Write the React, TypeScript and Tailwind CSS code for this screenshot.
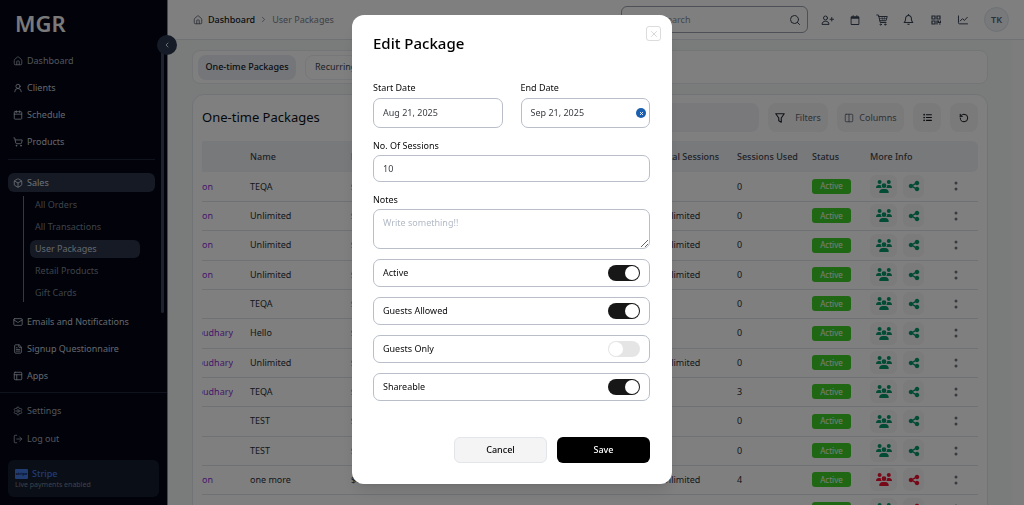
import React from "react";
import {
  Box, Calendar, ChevronLeft, ChevronRight, FileText, House, PanelsTopLeft, LogOut, Mail,
  RotateCcw, Search, Settings, ShoppingCart, UserRound, Columns2, X,
} from "lucide-react";
import { FaUsers, FaShareNodes, FaListUl, FaRegBell, FaRegCalendar } from "react-icons/fa6";

type IconType = React.ComponentType<{ className?: string; strokeWidth?: number }>;

function NavItem({ icon: Icon, label, active, bright }: { icon: IconType; label: string; active?: boolean; bright?: boolean }) {
  return (
    <a
      href="#"
      className={
        "flex h-[19px] items-center gap-[4px] rounded-md px-[5px] text-[9px] " +
        (active ? "bg-[#2a3448] text-[#dbe1ea]" : bright ? "text-[#c6cdd8]" : "text-[#a3abb9]")
      }
    >
      <Icon className="size-[10px] shrink-0" strokeWidth={2} />
      {label}
    </a>
  );
}

function Sidebar({ children }: { children?: React.ReactNode }) {
  const sub = ["All Orders", "All Transactions", "User Packages", "Retail Products", "Gift Cards"];
  return (
    <aside className="relative flex w-[168px] shrink-0 flex-col border-r border-[#8a8f98] bg-[#020414]">
      <div className="flex min-h-0 flex-1">
        <div className="flex min-w-0 flex-1 flex-col overflow-hidden pl-2">
          <div className="flex h-[45px] items-center pl-[7px] text-[22px] leading-none font-semibold text-[#f4f4f4]">MGR</div>
          <nav className="mr-[6px] flex flex-col gap-2 border-b border-[#20273a] pt-[6px] pb-2">
            <NavItem icon={House} label="Dashboard" />
            <NavItem icon={UserRound} label="Clients" bright />
            <NavItem icon={Calendar} label="Schedule" bright />
            <NavItem icon={ShoppingCart} label="Products" bright />
          </nav>
          <nav className="mr-[6px] flex flex-col pt-[13px]">
            <NavItem icon={Box} label="Sales" active />
            <ul className="mt-[4px] ml-[15px] flex flex-col gap-1 border-l border-[#6d7480] pl-[6px]">
              {sub.map((s) => (
                <li key={s}>
                  <a
                    href="#"
                    className={
                      "mr-[15px] flex h-[18px] items-center rounded-md px-[5px] text-[9px] " +
                      (s === "User Packages" ? "bg-[#2a3448] text-[#c6cdd8]" : "text-[#7c8493]")
                    }
                  >
                    {s}
                  </a>
                </li>
              ))}
            </ul>
            <div className="flex flex-col gap-2 pt-[10px]">
              <NavItem icon={Mail} label="Emails and Notifications" bright />
              <NavItem icon={FileText} label="Signup Questionnaire" bright />
              <NavItem icon={PanelsTopLeft} label="Apps" bright />
            </div>
          </nav>
        </div>
        <div className="mt-[45px] mr-[3px] h-[268px] w-[3px] rounded-full bg-[#39465f]" />
      </div>
      <div className="flex flex-col gap-[9px] border-t border-[#20273a] px-2 pt-[8px] pb-2">
        <NavItem icon={Settings} label="Settings" />
        <NavItem icon={LogOut} label="Log out" />
        <div className="mt-[3px] flex h-[37px] flex-col justify-center rounded-md bg-[#141d2e] px-[7px]">
          <div className="flex items-center gap-[4px] text-[9px] leading-[12px] font-medium text-[#4378e0]">
            <span className="flex h-[10px] w-[13px] items-center justify-center rounded-[1px] bg-[#4378e0] text-[4px] leading-none font-bold text-[#12203f]">stripe</span>
            Stripe
          </div>
          <div className="text-[7px] leading-[10px] text-[#7c8493]">Live payments enabled</div>
        </div>
      </div>
      {children}
    </aside>
  );
}

function UserPlusIcon() {
  return (
    <svg viewBox="0 0 26 20" className="h-[10px] w-[13px]" fill="none" stroke="currentColor" strokeWidth="2" strokeLinecap="round">
      <circle cx="9" cy="6" r="4" />
      <path d="M2 18c0-3.500 3-5.500 7-5.500s7 2 7 5.500z" strokeLinejoin="round" />
      <path d="M21.500 5v7M18 8.500h7" />
    </svg>
  );
}

function CartIcon() {
  return (
    <svg viewBox="0 0 24 24" className="size-[12px]" fill="none" stroke="currentColor" strokeWidth="2" strokeLinecap="round" strokeLinejoin="round">
      <path d="M1.500 2h3.500l3.500 15h11.500M5.500 5h17l-2.500 8.500H8" />
      <path d="M7 9h14M12 5l.8 8M17 5l-.8 8" strokeWidth="1.200" />
      <circle cx="9.500" cy="21" r="1.300" />
      <circle cx="18.500" cy="21" r="1.300" />
    </svg>
  );
}

function QrIcon() {
  return (
    <svg viewBox="0 0 20 20" className="size-[10px]" fill="none" stroke="currentColor" strokeWidth="2.400">
      <path d="M2 2h6v6H2zM12 2h6v6h-6zM2 12h6v6H2z" />
      <path d="M12 19v-7h3v3h4v-4M16 18h3" />
    </svg>
  );
}

function ChartIcon() {
  return (
    <svg viewBox="0 0 24 22" className="h-[10px] w-[12px]" fill="none" stroke="currentColor" strokeWidth="2.200" strokeLinecap="round" strokeLinejoin="round">
      <path d="M2 2v15a2.500 2.500 0 0 0 2.500 2.500H22M6 13l5-5 4 4 6.500-7" />
    </svg>
  );
}

function FunnelIcon() {
  return (
    <svg viewBox="0 0 20 20" className="size-[10px] text-[#1f2430]" fill="none" stroke="currentColor" strokeWidth="2.200" strokeLinejoin="round">
      <path d="M1.500 1.500h17l-6 8.500v8.500l-5-3V10z" />
    </svg>
  );
}

function Header() {
  const actions: [string, React.ReactNode][] = [
    ["Add user", <UserPlusIcon />],
    ["Calendar", <FaRegCalendar className="size-[10px]" />],
    ["Cart", <CartIcon />],
    ["Notifications", <FaRegBell className="size-[11px]" />],
    ["QR code", <QrIcon />],
    ["Reports", <ChartIcon />],
  ];
  return (
    <header className="flex h-[40px] shrink-0 items-center border-b border-[#dfe3e8] bg-white pr-[15px] pl-[25px]">
      <nav className="flex flex-1 items-center text-[9px]">
        <House className="size-[10px] text-[#555d6b]" />
        <a href="#" className="ml-[5px] font-medium text-[#111827]">Dashboard</a>
        <ChevronRight className="mx-[4px] size-[9px] text-[#6b7280]" />
        <span className="text-[#7b818d]">User Packages</span>
      </nav>
      <div className="flex h-[27px] w-[187px] items-center rounded-md border border-[#9aa1ae] bg-white pr-[6px] pl-[40px]">
        <input aria-label="Search" placeholder="Search" className="min-w-0 flex-1 bg-transparent text-[9px] outline-none placeholder:text-[#8a909c]" />
        <Search className="size-[12px] text-[#374151]" />
      </div>
      <div className="ml-[6px] flex items-center text-[#3b4759]">
        {actions.map(([label, icon]) => (
          <button key={label} aria-label={label} className="flex w-[27px] items-center justify-center">{icon}</button>
        ))}
      </div>
      <div className="ml-[8px] flex size-[25px] items-center justify-center rounded-full border border-[#dde3ea] bg-[#eef2f7] text-[9px] font-semibold text-[#576274]">TK</div>
    </header>
  );
}

type Row = { who: string; name: string; total: string; used: string; off?: "all" | "share" };
const rows: Row[] = [
  { who: "on", name: "TEQA", total: "", used: "0" },
  { who: "on", name: "Unlimited", total: "Unlimited", used: "0" },
  { who: "on", name: "Unlimited", total: "Unlimited", used: "0" },
  { who: "on", name: "Unlimited", total: "Unlimited", used: "0" },
  { who: "", name: "TEQA", total: "", used: "0" },
  { who: "oudhary", name: "Hello", total: "", used: "0" },
  { who: "oudhary", name: "Unlimited", total: "Unlimited", used: "0" },
  { who: "oudhary", name: "TEQA", total: "", used: "3" },
  { who: "", name: "TEST", total: "", used: "0" },
  { who: "", name: "TEST", total: "", used: "0" },
  { who: "on", name: "one more", total: "Unlimited", used: "4", off: "all" },
  { who: "", name: "", total: "", used: "", off: "share" },
];

function PackagesTable() {
  return (
    <table className="w-full table-fixed border-collapse text-left text-[9px] text-[#2b2f36]">
      <colgroup>
        <col className="w-[48px]" />
        <col className="w-[101px]" />
        <col />
        <col className="w-[78px]" />
        <col className="w-[75px]" />
        <col className="w-[58px]" />
        <col className="w-[76px]" />
        <col className="w-[32px]" />
      </colgroup>
      <thead>
        <tr className="h-[31px] bg-[#f1f2f6] text-[#3f4550]">
          <th />
          <th className="font-medium">Name</th>
          <th className="font-medium">Price</th>
          <th className="font-medium">Total Sessions</th>
          <th className="font-medium">Sessions Used</th>
          <th className="font-medium">Status</th>
          <th className="font-medium">More Info</th>
          <th className="rounded-r-md" />
        </tr>
      </thead>
      <tbody>
        {rows.map((r, i) => (
          <tr key={i} className="h-[29px] border-b border-[#dfe2e7] nth-[3n]:h-[30px]">
            <td>
              <div className={"flex w-[31px] overflow-hidden text-[#8b2fd6] " + (r.who.length > 2 ? "justify-end" : "")}>
                <a href="#">{r.who}</a>
              </div>
            </td>
            <td>{r.name}</td>
            <td>$0</td>
            <td>{r.total}</td>
            <td>{r.used}</td>
            <td>
              <span className="flex h-[15px] w-[39px] items-center justify-center rounded-[3px] bg-[#40cf28] text-[8px] leading-none text-[#f0fbee]">Active</span>
            </td>
            <td>
              <div className="flex gap-[6px]">
                <button aria-label="Guests" className={"flex h-[23px] w-[27px] items-center justify-center rounded-md bg-[#f6f7f9] " + (r.off === "all" ? "text-[#ef1030]" : "text-[#059669]")}>
                  <FaUsers className="h-[13px] w-[16px]" />
                </button>
                <button aria-label="Share" className={"flex h-[23px] w-[21px] items-center justify-center rounded-md bg-[#f6f7f9] " + (r.off ? "text-[#ef1030]" : "text-[#059669]")}>
                  <FaShareNodes className="size-[12px]" />
                </button>
              </div>
            </td>
            <td>
              <button aria-label="Row actions" className="flex w-[20px] justify-center">
                <svg viewBox="0 0 4 10" className="h-[10px] w-[4px]" fill="#737780">
                  <circle cx="2" cy="2" r="1.500" />
                  <circle cx="2" cy="8" r="1.500" />
                </svg>
              </button>
            </td>
          </tr>
        ))}
      </tbody>
    </table>
  );
}

function ToolButton({ children, label, className }: { children: React.ReactNode; label: string; className: string }) {
  return (
    <button aria-label={label} className={"flex h-[29px] items-center justify-center rounded-lg bg-[#f4f5f7] text-[9px] text-[#5d6470] " + className}>
      {children}
    </button>
  );
}

function Main() {
  return (
    <div className="flex min-w-0 flex-1 flex-col overflow-hidden">
      <Header />
      <div className="flex min-h-0 flex-1">
        <main className="flex min-w-0 flex-1 flex-col gap-[10px] overflow-hidden bg-[#f4f7f7] pt-[10px] pr-6 pl-6">
          <div className="flex h-[34px] shrink-0 items-center gap-[9px] rounded-lg border border-[#e6ebee] bg-white px-[5px]">
            <button className="h-[25px] w-[98px] rounded-lg bg-[#e9edf3] text-[9px] font-medium text-[#111827]">One-time Packages</button>
            <button className="h-[25px] rounded-lg border border-[#eceff2] px-[9px] text-[9px] text-[#3c4350]">Recurring Packages</button>
          </div>
          <section className="shrink-0 rounded-t-xl border border-[#e3e8ec] bg-white px-[9px] pt-[8px]">
            <div className="flex items-center gap-[9px] pb-[9px]">
              <h1 className="flex-1 text-[13px] text-[#0c0f14]">One-time Packages</h1>
              <div className="h-[29px] w-[200px] rounded-lg bg-[#f2f3f6]" />
              <ToolButton label="Filters" className="w-[60px] gap-[10px]"><FunnelIcon />Filters</ToolButton>
              <ToolButton label="Columns" className="w-[67px] gap-[5px]"><Columns2 className="size-[10px]" />Columns</ToolButton>
              <ToolButton label="List view" className="w-[28px]"><FaListUl className="size-[9px] text-[#14171c]" /></ToolButton>
              <ToolButton label="Reset" className="w-[28px]"><RotateCcw className="size-[10px] text-[#14171c]" strokeWidth={2.4} /></ToolButton>
            </div>
            <PackagesTable />
          </section>
        </main>
        <div className="w-[12px] bg-[#fafafa]" />
      </div>
    </div>
  );
}

function DateField({ id, label, value, clearable }: { id: string; label: string; value: string; clearable?: boolean }) {
  return (
    <div className="min-w-0 flex-1">
      <label htmlFor={id} className="block h-[17px] leading-[13px]">{label}</label>
      <div className="flex h-[30px] items-center rounded-[7px] border border-[#b9bec9] pr-[3px] pl-[9px]">
        <input id={id} defaultValue={value} className="min-w-0 flex-1 text-[#3a3d42] outline-none" />
        {clearable && (
          <button type="button" aria-label="Clear date" className="flex size-[10px] items-center justify-center rounded-full bg-[#1a5fae] text-white">
            <X className="size-[5px]" strokeWidth={4} />
          </button>
        )}
      </div>
    </div>
  );
}

function Toggle({ label, on }: { label: string; on?: boolean }) {
  return (
    <label className="flex h-[28px] items-center justify-between rounded-[7px] border border-[#b9bec9] px-[9px]">
      {label}
      <input type="checkbox" defaultChecked={on} className="peer sr-only" />
      <span className="flex h-[16px] w-[32px] items-center rounded-full bg-[#e5e5e5] p-px peer-checked:justify-end peer-checked:bg-[#171717]">
        <span className="size-[14px] rounded-full bg-white" />
      </span>
    </label>
  );
}

function EditDialog() {
  return (
    <div className="fixed inset-0 flex items-center justify-center bg-black/50 pb-[6px]">
      <form role="dialog" aria-label="Edit Package" className="relative w-[320px] rounded-xl bg-white pt-[17px] pr-[22px] pb-[21px] pl-[21px] text-[9px] text-[#09090b] shadow-lg">
        <button type="button" aria-label="Close" className="absolute top-[11px] right-[11px] flex size-[15px] items-center justify-center rounded-[3px] border border-[#dcdcdc] text-[#cfcfcf]">
          <X className="size-[10px]" />
        </button>
        <h2 className="text-[15px] leading-[22px] font-medium text-black">Edit Package</h2>
        <div className="mt-[27px] flex gap-[18px]">
          <DateField id="start" label="Start Date" value="Aug 21, 2025" />
          <DateField id="end" label="End Date" value="Sep 21, 2025" clearable />
        </div>
        <label htmlFor="sessions" className="mt-[11px] block h-[16px] leading-[13px]">No. Of Sessions</label>
        <input id="sessions" defaultValue="10" className="block h-[27px] w-full rounded-[7px] border border-[#b9bec9] px-[9px] text-[#3a3d42] outline-none" />
        <label htmlFor="notes" className="mt-[11px] block h-[16px] leading-[13px]">Notes</label>
        <textarea id="notes" placeholder="Write something!!" className="block h-[40px] w-full resize rounded-[7px] border border-[#b9bec9] px-[9px] py-[6px] leading-[13px] outline-none placeholder:text-[#b3bac6]" />
        <div className="mt-[10px] flex flex-col gap-[10px]">
          <Toggle label="Active" on />
          <Toggle label="Guests Allowed" on />
          <Toggle label="Guests Only" />
          <Toggle label="Shareable" on />
        </div>
        <div className="mt-[36px] flex justify-end gap-[10px]">
          <button type="button" className="h-[26px] w-[93px] rounded-md border border-[#e2e5ea] bg-[#f4f4f5] font-medium">Cancel</button>
          <button type="submit" className="h-[26px] w-[93px] rounded-md bg-black font-medium text-white">Save</button>
        </div>
      </form>
    </div>
  );
}

export default function App() {
  return (
    <div className="flex h-screen overflow-hidden bg-white font-['Noto_Sans','Open_Sans',sans-serif]">
      <Sidebar>
        <button aria-label="Collapse sidebar" className="absolute top-[35px] -right-[10px] flex size-[20px] items-center justify-center rounded-full bg-[#2b384f] text-[#d5dae2]">
          <ChevronLeft className="size-[8px]" strokeWidth={3} />
        </button>
      </Sidebar>
      <Main />
      <EditDialog />
    </div>
  );
}
